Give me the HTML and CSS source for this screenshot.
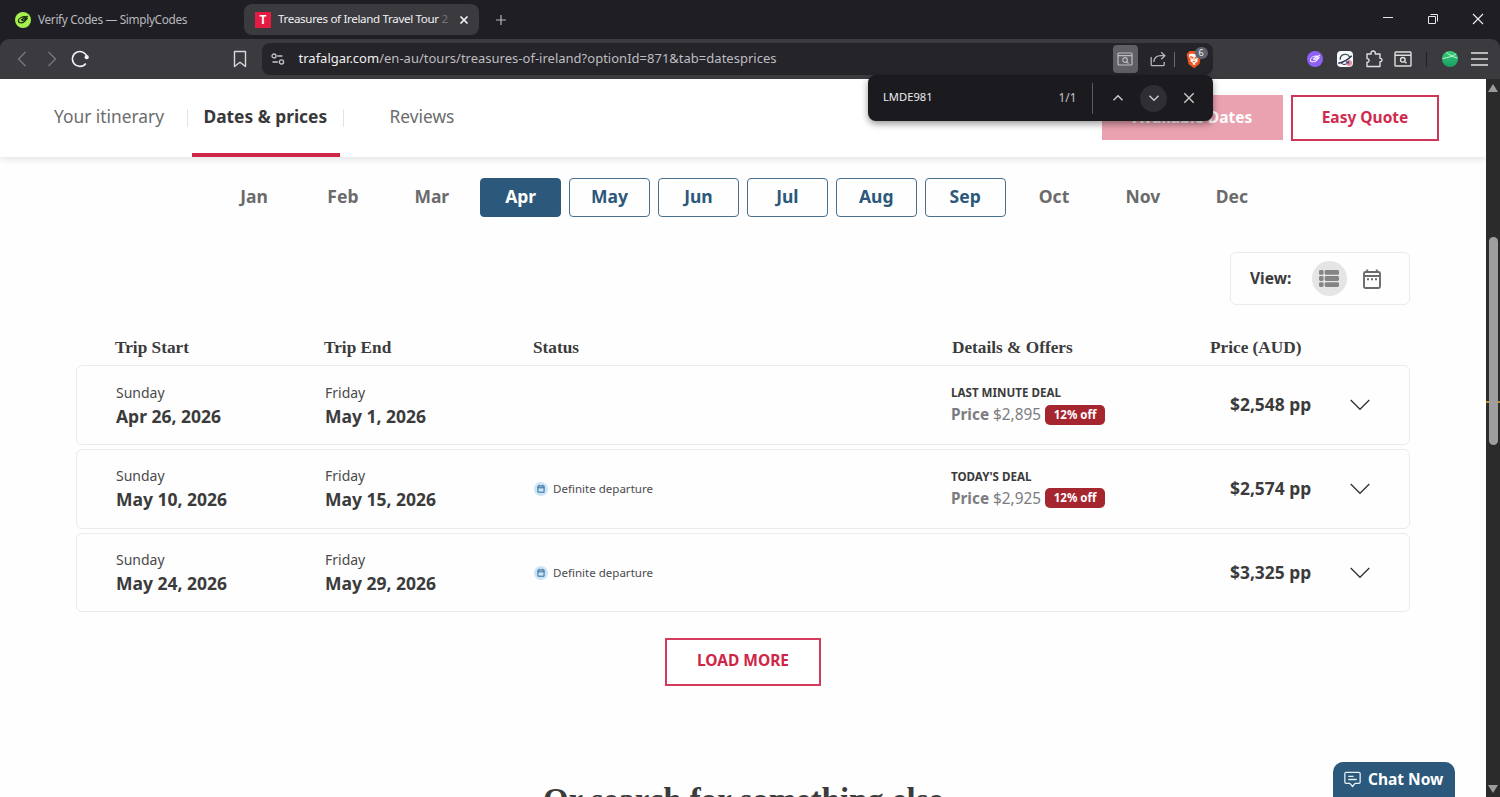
FILE: index.html
```html
<!DOCTYPE html>
<html lang="en">
<head>
<meta charset="utf-8">
<title>Treasures of Ireland Travel Tour</title>
<link rel="stylesheet" href="styles.css">
</head>
<body>
<div class="browser">
  <header class="tabstrip">
    <div class="tab">
      <svg class="favicon" viewBox="0 0 16 16"><circle cx="8" cy="8" r="8" fill="#a5f04d"/><path d="M12.8 4 9.600 6.800M10.200 4.700C6.500 4.800 3.500 6.500 3.400 8.700c0 2.600 4.600 2.800 6.500.4L12.300 6.300 7.800 8.600 6.300 7.800 10.800 4.800z" fill="none" stroke="#1d2b12" stroke-width="1.2" stroke-linejoin="round"/></svg>
      <span class="tab-title first-title">Verify Codes — SimplyCodes</span>
    </div>
    <div class="tab tab-active">
      <span class="favicon t-icon">T</span>
      <span class="tab-title active-title">Treasures of Ireland Travel Tour <i class="fade">2</i></span>
      <svg class="tab-close" viewBox="0 0 10 10"><path d="M1.5 1.5l7 7M8.5 1.5l-7 7" stroke="#f4f4f5" stroke-width="1.7"/></svg>
    </div>
    <svg class="new-tab" viewBox="0 0 12 12"><path d="M6 1v10M1 6h10" stroke="#b5b5b8" stroke-width="1.2"/></svg>
    <div class="window-controls">
      <svg viewBox="0 0 12 12"><path d="M1 4.5h10" stroke="#e6e6e8"/></svg>
      <svg viewBox="0 0 12 12" fill="none" stroke="#e6e6e8"><path d="M1.500 3.500h7v7h-7z"/><path d="M3.500 1.500h7v7"/></svg>
      <svg viewBox="0 0 12 12"><path d="M1 1l10 10M11 1 1 11" stroke="#f0f0f2" stroke-width="1.1"/></svg>
    </div>
  </header>

  <div class="toolbar">
    <svg class="nav-arrow" viewBox="0 0 10 16"><path d="M8.5 1 1.5 8l7 7" fill="none" stroke="#77777c" stroke-width="1.4"/></svg>
    <svg class="nav-arrow fwd" viewBox="0 0 10 16"><path d="M1.5 1l7 7-7 7" fill="none" stroke="#77777c" stroke-width="1.4"/></svg>
    <svg class="reload" viewBox="0 0 18 18"><path d="M14.800 13.400A7.400 7.400 0 1 1 16.100 7.500" fill="none" stroke="#f2f2f4" stroke-width="1.6"/><circle cx="15.700" cy="7.200" r="2.100" fill="#f2f2f4"/></svg>
    <svg class="bookmark" viewBox="0 0 14 18"><path d="M1.5 1.5h11v15L7 12.2 1.5 16.5z" fill="none" stroke="#d8d8db" stroke-width="1.4" stroke-linejoin="round"/></svg>
    <div class="address">
      <svg class="tune" viewBox="0 0 14 12" fill="none" stroke="#c6c6ca" stroke-width="1.3"><circle cx="3" cy="3" r="2"/><path d="M6.200 3h5.200M1.500 9h5.400"/><circle cx="10.5" cy="9" r="2.1"/></svg>
      <span class="url"><b>trafalgar.com</b>/en-au/tours/treasures-of-ireland?optionId=871&amp;tab=datesprices</span>
      <div class="find-toggle"><svg viewBox="0 0 16 14" fill="none" stroke="#bdbdc1" stroke-width="1.2"><rect x="1" y="1" width="14" height="12" rx="1"/><path d="M1 3.6h14M9.8 9.8l1.7 1.7"/><circle cx="8" cy="8" r="2.3"/></svg></div>
      <svg class="share" viewBox="0 0 16 16" fill="none" stroke="#b7b7bb" stroke-width="1.3"><path d="M1.2 6v7.7q0 1 1 1h11q1 0 1-1V11"/><path d="M3.8 11C4.1 6.8 7 4.7 11 4.7h3.6M11.2 1.2l3.7 3.5-3.7 3.6"/></svg>
      <i class="address-rule"></i>
      <div class="shield">
        <svg viewBox="0 0 16 19"><path d="M3.5 1h9L15.4 4.3 13.5 14 8 18.2 2.5 14 .6 4.3z" fill="#ee5421"/><path d="M3.2 4.2 6.2 3.6 8 4.3l1.8-.7 3 .6.5 2.1-2.2 3.6.8 1.4-3.1 2.2.9.8L8 15l-1.7-1 .9-.8-3.1-2.2.8-1.4-2.2-3.6z" fill="#fff"/><path d="M4.2 6.5 6.7 7l-.5 1.7zM11.8 6.5 9.3 7l.5 1.7zM8 7v3.4M6.4 11.2 8 12l1.6-.8" fill="#ee5421" stroke="#ee5421" stroke-width=".7"/></svg>
        <span class="shield-count">6</span>
      </div>
    </div>
    <div class="extensions">
      <svg class="ext" viewBox="0 0 16 16"><circle cx="8" cy="8" r="8" fill="#8f60f5"/><path d="M12.8 4 9.600 6.800M10.200 5C6.500 5 3.500 6.700 3.400 8.900c0 2.500 4.600 2.600 6.500.2L12.300 6.500 7.800 8.700 6.500 8 10.800 5z" fill="none" stroke="#f3edff" stroke-width="1.05" stroke-linejoin="round"/></svg>
      <svg class="ext" viewBox="0 0 16 16"><rect width="16" height="16" rx="4" fill="#f6f7f9"/><path d="M3.2 8.8A5 5 0 0 1 12.6 6" fill="none" stroke="#24364e" stroke-width="1.2"/><path d="M1.3 12.2C5.5 11.5 11.6 8.2 14.7 4.8" fill="none" stroke="#24364e" stroke-width="1.5"/><path d="M4.3 12.4a5 5 0 0 0 5.4.5" fill="none" stroke="#24364e"/><circle cx="12" cy="12" r="3" fill="#e58e96"/><path d="M9.2 10.400h3v2H9z" fill="#304b86"/></svg>
      <svg class="ext puzzle" viewBox="0 0 18 18"><path d="M2 4h4.2C5.5 1.800 7 1 8.200 1s2.700.8 2 3H15v4.400c2.600-.6 2.600 3.800 0 3.200V16.500H2v-4.300c2.700.5 2.700-4 0-3.500z" fill="none" stroke="#dedee1" stroke-width="1.4" stroke-linejoin="round"/></svg>
      <svg class="ext search-page" viewBox="0 0 18 16" fill="none" stroke="#dedee1" stroke-width="1.4"><rect x="1" y="1" width="16" height="14" rx=".8"/><path d="M1 4.3h16M10.3 10.3l2.2 2"/><circle cx="8.8" cy="8.8" r="2.3"/></svg>
      <i class="ext-rule"></i>
      <svg class="ext profile" viewBox="0 0 16 16"><defs><linearGradient id="g" x2="0" y2="1"><stop stop-color="#35cf75"/><stop offset="1" stop-color="#199b65"/></linearGradient></defs><circle cx="8" cy="8" r="8" fill="url(#g)"/><path d="M.5 7.400C6 6.800 11 5.200 14.200 2.800M4.500 1.500c2.400 2 6 4.500 10.900 5.400" fill="none" stroke="#d5f8e1" stroke-width=".9"/></svg>
      <svg class="menu" viewBox="0 0 17 14"><path d="M0 1h17M0 7h17M0 13h17" stroke="#e4e4e6" stroke-width="1.5"/></svg>
    </div>
  </div>

  <div class="viewport">
    <main class="page">
      <nav class="subnav">
        <a class="nav-itinerary">Your itinerary</a>
        <a class="nav-dates">Dates &amp; prices</a>
        <a class="nav-reviews">Reviews</a>
        <div class="cta">
          <button class="btn-dates">Available Dates</button>
          <button class="btn-quote">Easy Quote</button>
        </div>
      </nav>

      <div class="months">
        <span>Jan</span><span>Feb</span><span>Mar</span><span class="open selected">Apr</span><span class="open">May</span><span class="open">Jun</span><span class="open">Jul</span><span class="open">Aug</span><span class="open">Sep</span><span>Oct</span><span>Nov</span><span>Dec</span>
      </div>

      <div class="view-switch">
        <b>View:</b>
        <span class="view-list"><svg viewBox="0 0 20 17" fill="#858587"><rect width="4.6" height="4.8" rx="1.4"/><rect x="5.7" width="14.3" height="4.8" rx="1.4"/><rect y="6.1" width="4.6" height="4.8" rx="1.4"/><rect x="5.7" y="6.1" width="14.3" height="4.8" rx="1.4"/><rect y="12.2" width="4.6" height="4.8" rx="1.4"/><rect x="5.7" y="12.2" width="14.3" height="4.8" rx="1.4"/></svg></span>
        <svg class="view-cal" viewBox="0 0 18 20"><rect x="1" y="3" width="16" height="16" rx="1.5" fill="none" stroke="#6a6a6c" stroke-width="1.9"/><path d="M1 7h16M4.200 0.500v3M13.800 0.500v3" stroke="#6a6a6c" stroke-width="1.9"/><path d="M4 10.200h2M8 10.200h2M12 10.200h2" stroke="#6a6a6c" stroke-width="2"/></svg>
      </div>

      <section class="departures">
        <div class="cols heads">
          <span>Trip Start</span><span>Trip End</span><span>Status</span><span>Details &amp; Offers</span><span>Price (AUD)</span>
        </div>
        <article class="cols trip">
          <div><p class="day">Sunday</p><p class="date">Apr 26, 2026</p></div>
          <div><p class="day">Friday</p><p class="date">May 1, 2026</p></div>
          <div></div>
          <div class="offer"><p class="deal">LAST MINUTE DEAL</p><p class="was"><span><b>Price</b> $2,895</span><em>12% off</em></p></div>
          <div class="price">$2,548 pp</div>
          <svg class="chev" viewBox="0 0 20 12"><path d="M.7 1 10 10.3 19.3 1" fill="none" stroke="#333" stroke-width="1.3"/></svg>
        </article>
        <article class="cols trip">
          <div><p class="day">Sunday</p><p class="date">May 10, 2026</p></div>
          <div><p class="day">Friday</p><p class="date">May 15, 2026</p></div>
          <div class="status"><svg viewBox="0 0 14 14"><circle cx="7" cy="7" r="7" fill="#c9e5f9"/><path d="M3.900 4h6.200v6.200H3.900zM3.900 5.800h6.200M5.300 2.800V4M8.700 2.800V4" fill="none" stroke="#376b91" stroke-width="1"/></svg>Definite departure</div>
          <div class="offer"><p class="deal">TODAY'S DEAL</p><p class="was"><span><b>Price</b> $2,925</span><em>12% off</em></p></div>
          <div class="price">$2,574 pp</div>
          <svg class="chev" viewBox="0 0 20 12"><path d="M.7 1 10 10.3 19.3 1" fill="none" stroke="#333" stroke-width="1.3"/></svg>
        </article>
        <article class="cols trip">
          <div><p class="day">Sunday</p><p class="date">May 24, 2026</p></div>
          <div><p class="day">Friday</p><p class="date">May 29, 2026</p></div>
          <div class="status"><svg viewBox="0 0 14 14"><circle cx="7" cy="7" r="7" fill="#c9e5f9"/><path d="M3.900 4h6.200v6.200H3.900zM3.900 5.800h6.200M5.300 2.800V4M8.700 2.800V4" fill="none" stroke="#376b91" stroke-width="1"/></svg>Definite departure</div>
          <div></div>
          <div class="price">$3,325 pp</div>
          <svg class="chev" viewBox="0 0 20 12"><path d="M.7 1 10 10.3 19.3 1" fill="none" stroke="#333" stroke-width="1.3"/></svg>
        </article>
      </section>
      <button class="load-more">LOAD MORE</button>
      <h2 class="else">Or search for something else</h2>
    </main>
    <div class="scrollbar">
      <svg viewBox="0 0 10 8"><path d="M5 0 10 8H0z" fill="#9b9b9b"/></svg>
      <i class="mark"></i><i class="thumb"></i>
      <svg viewBox="0 0 10 8"><path d="M5 8 0 0h10z" fill="#9b9b9b"/></svg>
    </div>
  </div>

  <div class="findbar">
    <span class="query">LMDE981</span><span class="hits">1/1</span><i></i>
    <svg class="find-prev" viewBox="0 0 12 12"><path d="M1.5 8.2 6 3.8l4.5 4.4" fill="none" stroke="#c9c9cc" stroke-width="1.5"/></svg>
    <span class="find-next"><svg viewBox="0 0 12 12"><path d="M1.5 3.8 6 8.2l4.5-4.4" fill="none" stroke="#c9c9cc" stroke-width="1.5"/></svg></span>
    <svg class="find-close" viewBox="0 0 12 12"><path d="M1.3 1.3l9.4 9.4M10.7 1.3l-9.4 9.4" stroke="#c9c9cc" stroke-width="1.4"/></svg>
  </div>
  <div class="chat"><svg viewBox="0 0 16 16" fill="none" stroke="#e8f1f8" stroke-width="1.2"><path d="M2 1.2h12q1.2 0 1.2 1.2v8q0 1.2-1.2 1.2h-3.5L8 14.6l-2.500-3H2Q.8 11.6.8 10.400v-8Q.8 1.200 2 1.200zM4 5h5M4 8h8"/></svg>Chat Now</div>
</div>
</body>
</html>
```
FILE: styles.css
```css
* { box-sizing: border-box; }
body { margin: 0; background: #1f1e24; font-family: "Noto Sans", sans-serif; color: #3b3b3c; overflow: hidden; }
svg { display: block; flex: none; }
p, h2 { margin: 0; }
button { font: inherit; padding: 0; }
.browser { position: relative; width: 1500px; height: 797px; overflow: hidden; display: flex; flex-direction: column; }

.tabstrip { height: 39px; flex: none; display: flex; align-items: center; background: #1f1e24; }
.tab { display: flex; align-items: center; width: 244px; height: 31px; padding-left: 15px; font-size: 12px; color: #b9b9bd; }
.tab-active { width: 235px; background: #3b3a3f; border-radius: 8px; padding-left: 11px; color: #f1f1f2; }
.favicon { width: 16px; height: 16px; margin-right: 7px; flex: none; }
.t-icon { background: #e51b42; color: #fff; font: bold 12px/16px "Noto Sans", sans-serif; text-align: center; }
.tab-title { white-space: nowrap; padding-bottom: 2px; }
.first-title { font-size: 11.8px; letter-spacing: -.33px; }
.active-title { width: 171px; font-size: 11.6px; letter-spacing: -.34px; }
.fade { font-style: normal; color: #737277; }
.tab-close { width: 10px; height: 10px; margin-left: 10px; }
.new-tab { width: 12px; height: 12px; margin-left: 16px; }
.window-controls { display: flex; gap: 33px; margin-left: auto; margin-right: 16px; padding-bottom: 1px; }
.window-controls svg { width: 12px; height: 12px; }

.toolbar { height: 40px; flex: none; display: flex; align-items: center; padding-left: 16.5px; background: #3b3a3f; border-radius: 9px 9px 0 0; }
.nav-arrow { width: 10px; height: 16px; }
.fwd { margin-left: 20px; }
.reload { width: 18px; height: 18px; margin-left: 14.5px; }
.bookmark { width: 14px; height: 18px; margin-left: 143.5px; }
.address { width: 951px; height: 32px; margin-left: 15.5px; display: flex; align-items: center; padding-left: 8.5px; background: #252429; border-radius: 8px; }
.tune { width: 14px; height: 12px; }
.url { width: 814px; margin-left: 14px; padding-bottom: 2px; font-size: 13px; color: #bdbdc2; white-space: nowrap; letter-spacing: .01px; }
.url b { font-weight: 400; color: #f0f0f2; }
.find-toggle { width: 25px; height: 28px; border-radius: 4px; background: #605f64; display: flex; align-items: center; justify-content: center; }
.find-toggle svg { width: 16px; height: 14px; }
.share { width: 16px; height: 16px; margin-left: 12px; }
.address-rule { width: 1px; height: 15px; margin-left: 8px; background: #69696e; }
.shield { position: relative; margin-left: 11px; }
.shield svg { width: 16px; height: 19px; }
.shield-count { position: absolute; left: 9px; top: -3px; width: 13px; height: 12px; border-radius: 6px; background: #5d626e; color: #f0f0f2; font-size: 9px; line-height: 12px; text-align: center; }
.extensions { display: flex; align-items: center; margin-left: 93.5px; }
.ext { width: 16px; height: 16px; margin-right: 14px; }
.puzzle { width: 18px; height: 18px; margin-right: 11px; margin-left: -2px; }
.search-page { width: 18px; height: 16px; margin-right: 14px; }
.ext-rule { width: 1px; height: 15px; background: #202024; margin-right: 15px; }
.profile { margin-right: 13px; }
.menu { width: 17px; height: 14px; }

.viewport { height: 718px; display: flex; background: #fff; }
.page { width: 1486px; display: flex; flex-direction: column; background: #fefefe; overflow: hidden; }
.subnav { height: 78px; flex: none; display: flex; align-items: flex-start; background: #fff; box-shadow: 0 1px 8px rgba(0,0,0,.14); padding-left: 54px; font-size: 17.35px; line-height: 22px; color: #6c6c6d; white-space: nowrap; }
.nav-itinerary { width: 137.5px; margin-top: 26px; background: linear-gradient(#e3e3e3, #e3e3e3) 133px 4px / 1px 18px no-repeat; }
.nav-dates { width: 148.5px; height: 78px; padding: 26px 0 0 12px; border-bottom: 4px solid #cf2648; color: #38383a; font-weight: 700; }
.nav-reviews { margin-top: 26px; padding-left: 49.5px; background: linear-gradient(#e3e3e3, #e3e3e3) 3px 4px / 1px 18px no-repeat; }
.cta { display: flex; gap: 8px; margin: 16px 47px 0 auto; font-size: 15.5px; font-weight: 700; }
.cta button { padding-bottom: 2px; }
.btn-dates { width: 181px; height: 45px; border: 0; background: #eba2b0; color: #fff; }
.btn-quote { width: 148px; height: 46px; border: 2px solid #cf3557; background: #fff; color: #d12a4e; }

.months { display: grid; grid-template-columns: repeat(12, 81px); column-gap: 7.9px; height: 39px; flex: none; margin: 21px 0 0 213.5px; font-size: 17.5px; font-weight: 700; line-height: 36px; text-align: center; color: #6b6b6c; }
.open { border: 1px solid #48718f; border-radius: 4px; line-height: 34px; color: #2b587b; }
.selected { background: #2b587b; border-color: #2b587b; color: #fff; }

.view-switch { width: 180px; height: 53px; flex: none; margin: 35px 76px 0 auto; border: 1px solid #ebebec; border-radius: 6px; display: flex; align-items: center; padding-left: 19px; font-size: 15.5px; }
.view-switch b { width: 62px; padding-bottom: 2px; }
.view-list { width: 35px; height: 35px; border-radius: 50%; background: #e5e5e6; display: flex; align-items: center; justify-content: center; }
.view-list svg { width: 20px; height: 17px; margin-right: 1px; }
.view-cal { width: 18px; height: 20px; margin-left: 16px; }

.departures { width: 1333.6px; flex: none; margin: 29px 0 0 76.4px; display: flex; flex-direction: column; gap: 4px; }
.cols { display: grid; grid-template-columns: 209px 209px 417px 279px 120px 20px; padding-left: 38.6px; white-space: nowrap; }
.heads { height: 27.4px; font: bold 17.25px/28px "Liberation Serif", serif; grid-template-columns: 209px 209px 419px 258px 120px; }
.trip { height: 79.7px; border: 1px solid #ebebec; border-radius: 6px; align-items: center; }
.day { font-size: 14px; line-height: 22px; color: #4a4a4b; }
.date { font-size: 17.5px; line-height: 25px; font-weight: 700; }
.status { display: flex; align-items: center; gap: 5px; font-size: 11.55px; color: #4c4c4e; }
.status svg { width: 14px; height: 14px; }
.offer { padding-bottom: 2px; }
.deal { font-size: 11.6px; line-height: 21px; font-weight: 700; }
.was { display: flex; align-items: center; gap: 4px; font-size: 15.35px; line-height: 23px; color: #7c7c80; }
.was em { width: 60px; height: 20px; border-radius: 5px; background: #a62630; color: #fff; font: bold 11.5px/19px "Noto Sans", sans-serif; text-align: center; }
.price { padding-bottom: 2px; font-size: 17.4px; font-weight: 700; }
.chev { width: 20px; height: 12px; }

.load-more { width: 156px; height: 48px; flex: none; margin: 25.4px 0 0 665px; padding-bottom: 3px; border: 2px solid #d43a5c; background: #fff; color: #cf2648; font-size: 15.5px; font-weight: 700; }
.else { margin: 96px 0 0 543px; font: bold 32.9px/36px "Liberation Serif", serif; white-space: nowrap; flex: none; }

.scrollbar { position: relative; width: 14px; display: flex; flex-direction: column; justify-content: space-between; align-items: center; background: #2b2b2c; padding: 5px 0 4px; }
.scrollbar svg { width: 10px; height: 8px; }
.mark { position: absolute; left: 0; top: 322px; width: 14px; height: 2px; background: #c28b24; }
.thumb { position: absolute; left: 3px; top: 158px; width: 9px; height: 208px; border-radius: 5px; background: #9e9e9e; }

.findbar { position: absolute; left: 868px; top: 75px; width: 345px; height: 46px; border-radius: 8px; background: #1b1b1f; box-shadow: 0 3px 7px rgba(0,0,0,.4); display: flex; align-items: center; padding-left: 15px; font-size: 12px; color: #ececee; }
.query { width: 175.5px; padding-bottom: 3px; font-size: 11.2px; }
.hits { width: 33px; padding-bottom: 3px; font-size: 11.8px; color: #c5c5c8; }
.findbar i { width: 1px; height: 31px; background: #5a5a5e; }
.findbar svg { width: 12px; height: 12px; }
.find-prev { margin-left: 19.5px; }
.find-next { width: 27px; height: 27px; border-radius: 50%; background: #2f2f33; margin: 0 15.5px 0 16px; display: flex; align-items: center; justify-content: center; }
.chat { position: absolute; left: 1332.5px; top: 762px; width: 122.5px; height: 40px; border-radius: 10px 10px 0 0; background: #2b587b; color: #fff; display: flex; align-items: center; gap: 7px; padding: 0 0 6px 11.5px; font-size: 15.5px; font-weight: 700; white-space: nowrap; }
.chat svg { width: 17px; height: 17px; margin-top: 1px; }
```
